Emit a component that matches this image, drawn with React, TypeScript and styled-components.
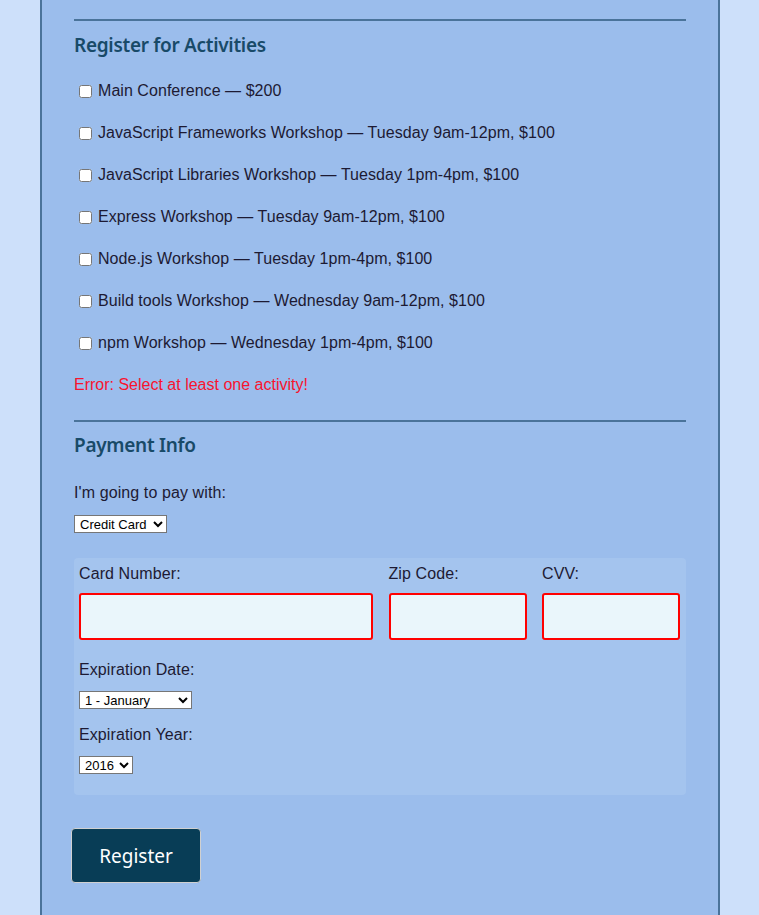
import React from "react";
import styled, { createGlobalStyle } from "styled-components";

const Global = createGlobalStyle`
  html, body { margin: 0; padding: 0; background: #cde0fa; }
  body { font-family: "Liberation Sans", Arial, sans-serif; color: #1d1a33; }
  * { box-sizing: border-box; }
`;

const Page = styled.div`
  display: flex;
  justify-content: center;
  min-height: 915px;
`;

const Container = styled.form`
  width: 680px;
  margin-left: 1px;
  background: #9bbdec;
  border-left: 2px solid #4a739a;
  border-right: 2px solid #4a739a;
  padding: 19px 32px 32px 32px;
  min-height: 915px;
`;

const Rule = styled.hr`
  border: none;
  height: 2px;
  background: #4a739a;
  margin: 0 0 12px 0;
`;

const Heading = styled.h2<{ $after?: number }>`
  font-family: "Noto Sans", sans-serif;
  font-weight: 600;
  font-size: 19px;
  line-height: 24px;
  color: #184a68;
  margin: 0 0 ${(p) => p.$after ?? 12}px 0;
  letter-spacing: -0.3px;
`;

const Activity = styled.label`
  display: flex;
  align-items: center;
  height: 42px;
  font-size: 16px;
  letter-spacing: 0.05px;
  padding-left: 1px;
`;

const Check = styled.input`
  width: 13px;
  height: 13px;
  margin: 0 6px 0 4px;
`;

const ErrorText = styled.p`
  color: #f8142f;
  font-size: 16px;
  line-height: 20px;
  margin: 11px 0 25px 0;
`;

const Label = styled.label<{ $gap?: number }>`
  display: block;
  font-size: 16px;
  line-height: 20px;
  letter-spacing: 0.1px;
  margin-bottom: ${(p) => p.$gap ?? 11}px;
`;

const Select = styled.select<{ $w: number }>`
  display: block;
  width: ${(p) => p.$w}px;
  height: 18px;
  font-family: "Liberation Sans", Arial, sans-serif;
  font-size: 13px;
  background: #fff;
  color: #000;
  border: 1px solid #767676;
  border-radius: 0;
  padding: 0 0 0 1px;
`;

const Panel = styled.div`
  margin-top: 25px;
  background: #a4c4ee;
  border-radius: 4px;
  padding: 6px 6px 21px 5px;
`;

const CardRow = styled.div`
  display: grid;
  grid-template-columns: 294fr 138fr 138fr;
  column-gap: 15.5px;
  margin-bottom: 20px;
`;

const Field = styled.div`
  display: flex;
  flex-direction: column;
`;

const TextInput = styled.input`
  height: 47px;
  width: 100%;
  background: #eaf6fb;
  border: 2px solid #ff0000;
  border-radius: 3px;
  margin-top: 9px;
`;

const Spacer = styled.div<{ $h: number }>`
  height: ${(p) => p.$h}px;
`;

const Button = styled.button`
  margin: 33px 0 0 -3px;
  width: 130px;
  height: 55px;
  background: #083d56;
  color: #fff;
  border: 1px solid #d0d0d0;
  border-radius: 4px;
  font-family: "Noto Sans", sans-serif;
  font-size: 19px;
  cursor: pointer;
`;

const activities = [
  "Main Conference — $200",
  "JavaScript Frameworks Workshop — Tuesday 9am-12pm, $100",
  "JavaScript Libraries Workshop — Tuesday 1pm-4pm, $100",
  "Express Workshop — Tuesday 9am-12pm, $100",
  "Node.js Workshop — Tuesday 1pm-4pm, $100",
  "Build tools Workshop — Wednesday 9am-12pm, $100",
  "npm Workshop — Wednesday 1pm-4pm, $100",
];

const months = [
  "1 - January", "2 - February", "3 - March", "4 - April", "5 - May", "6 - June",
  "7 - July", "8 - August", "9 - September", "10 - October", "11 - November", "12 - December",
];

export default function App() {
  return (
    <>
      <Global />
      <Page>
        <Container onSubmit={(e) => e.preventDefault()}>
          <Rule />
          <Heading $after={13}>Register for Activities</Heading>
          {activities.map((a) => (
            <Activity key={a}>
              <Check type="checkbox" />
              {a}
            </Activity>
          ))}
          <ErrorText>Error: Select at least one activity!</ErrorText>
          <Rule style={{ marginBottom: 11 }} />
          <Heading $after={26}>Payment Info</Heading>
          <Label $gap={12}>I'm going to pay with:</Label>
          <Select $w={93} defaultValue="credit">
            <option value="credit">Credit Card</option>
            <option value="paypal">PayPal</option>
            <option value="bitcoin">Bitcoin</option>
          </Select>
          <Panel>
            <CardRow>
              <Field>
                <Label $gap={0}>Card Number:</Label>
                <TextInput type="text" />
              </Field>
              <Field>
                <Label $gap={0}>Zip Code:</Label>
                <TextInput type="text" />
              </Field>
              <Field>
                <Label $gap={0}>CVV:</Label>
                <TextInput type="text" />
              </Field>
            </CardRow>
            <Label>Expiration Date:</Label>
            <Select $w={113}>
              {months.map((m) => (
                <option key={m}>{m}</option>
              ))}
            </Select>
            <Spacer $h={16} />
            <Label>Expiration Year:</Label>
            <Select $w={54}>
              {[2016, 2017, 2018, 2019, 2020].map((y) => (
                <option key={y}>{y}</option>
              ))}
            </Select>
          </Panel>
          <Button type="submit">Register</Button>
        </Container>
      </Page>
    </>
  );
}
